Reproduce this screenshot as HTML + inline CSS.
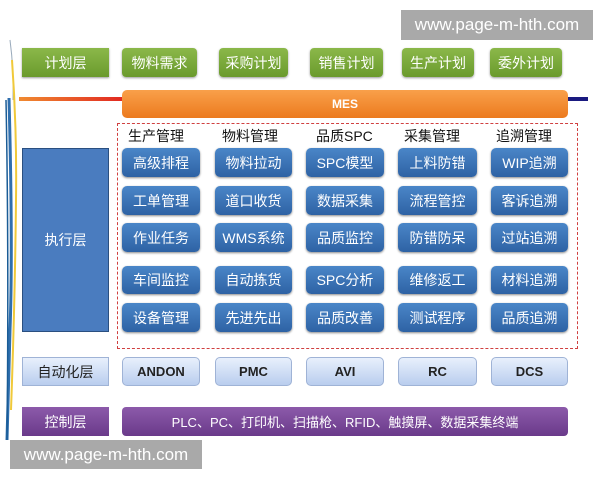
<!DOCTYPE html>
<html><head><meta charset="utf-8"><style>
*{margin:0;padding:0;box-sizing:border-box}
body{width:600px;height:480px;background:#fff;position:relative;overflow:hidden;font-family:"Liberation Sans","Noto Sans CJK SC",sans-serif}
.b{position:absolute;display:flex;align-items:center;justify-content:center;font-size:14px;white-space:nowrap}
.g{background:linear-gradient(#8bb84a,#6a9a2c);color:#fff;border-radius:4px;box-shadow:0 1px 2px #999}
.bl{background:linear-gradient(#4a86c8,#2e62a4);color:#fff;border-radius:5px;box-shadow:0 1px 2px #888}
.lb{background:linear-gradient(#e8f0fc,#b9cdee);color:#222;border:1px solid #9fb3d6;border-radius:5px;font-family:"Liberation Sans Narrow","Liberation Sans","Noto Sans CJK SC",sans-serif;font-weight:bold;font-size:13px}
.p{background:linear-gradient(#8c5aaa,#6a3a8a);color:#fff;border-radius:4px}
.h{position:absolute;top:126px;font-size:14px;color:#111}
.wm{position:absolute;background:#a9a9a9;color:#fff;font-size:17px;display:flex;align-items:center;justify-content:center}
</style></head><body>
<svg style="position:absolute;left:0;top:0" width="30" height="480">
<path d="M10 40 Q14 70 13 100" stroke="#9ab" stroke-width="1" fill="none"/>
<path d="M9 98 Q13 250 10 330 Q8 400 7 440" stroke="#2f6fae" stroke-width="3" fill="none"/>
<path d="M12 60 Q17 130 16 200 Q15 300 11 410" stroke="#f0c93a" stroke-width="2" fill="none"/>
<path d="M6 100 Q9 250 7 440" stroke="#1a5c96" stroke-width="1.5" fill="none"/>
</svg>
<div class="wm" style="left:401px;top:10px;width:192px;height:30px">www.page-m-hth.com</div>
<div class="b g" style="left:22px;top:48px;width:87px;height:29px;border-radius:0">计划层</div>
<div class="b g" style="left:122px;top:48px;width:75px;height:29px">物料需求</div>
<div class="b g" style="left:219px;top:48px;width:69px;height:29px">采购计划</div>
<div class="b g" style="left:310px;top:48px;width:73px;height:29px">销售计划</div>
<div class="b g" style="left:402px;top:48px;width:72px;height:29px">生产计划</div>
<div class="b g" style="left:490px;top:48px;width:72px;height:29px">委外计划</div>
<div style="position:absolute;left:19px;top:97px;width:569px;height:4px;background:linear-gradient(90deg,#f08a30,#e02020 20%,#e02020 95%,#1a1a80 95%)"></div>
<div class="b" style="left:122px;top:90px;width:446px;height:28px;background:linear-gradient(#f9a04a,#ec7a1e);border-radius:5px;color:#fff;font-size:12px;font-weight:bold">MES</div>
<div style="position:absolute;left:117px;top:123px;width:461px;height:226px;border:1.5px dashed #d04040"></div>
<div class="h" style="left:128px">生产管理</div>
<div class="h" style="left:222px">物料管理</div>
<div class="h" style="left:316px">品质SPC</div>
<div class="h" style="left:404px">采集管理</div>
<div class="h" style="left:496px">追溯管理</div>
<div class="b" style="left:22px;top:148px;width:87px;height:184px;background:#4a7cbf;border:1px solid #2a4f80;color:#fff">执行层</div>
<div class="b bl" style="left:122px;top:148px;width:78px;height:29px">高级排程</div>
<div class="b bl" style="left:215px;top:148px;width:77px;height:29px">物料拉动</div>
<div class="b bl" style="left:306px;top:148px;width:78px;height:29px">SPC模型</div>
<div class="b bl" style="left:398px;top:148px;width:79px;height:29px">上料防错</div>
<div class="b bl" style="left:491px;top:148px;width:77px;height:29px">WIP追溯</div>
<div class="b bl" style="left:122px;top:186px;width:78px;height:29px">工单管理</div>
<div class="b bl" style="left:215px;top:186px;width:77px;height:29px">道口收货</div>
<div class="b bl" style="left:306px;top:186px;width:78px;height:29px">数据采集</div>
<div class="b bl" style="left:398px;top:186px;width:79px;height:29px">流程管控</div>
<div class="b bl" style="left:491px;top:186px;width:77px;height:29px">客诉追溯</div>
<div class="b bl" style="left:122px;top:223px;width:78px;height:29px">作业任务</div>
<div class="b bl" style="left:215px;top:223px;width:77px;height:29px">WMS系统</div>
<div class="b bl" style="left:306px;top:223px;width:78px;height:29px">品质监控</div>
<div class="b bl" style="left:398px;top:223px;width:79px;height:29px">防错防呆</div>
<div class="b bl" style="left:491px;top:223px;width:77px;height:29px">过站追溯</div>
<div class="b bl" style="left:122px;top:266px;width:78px;height:28px">车间监控</div>
<div class="b bl" style="left:215px;top:266px;width:77px;height:28px">自动拣货</div>
<div class="b bl" style="left:306px;top:266px;width:78px;height:28px">SPC分析</div>
<div class="b bl" style="left:398px;top:266px;width:79px;height:28px">维修返工</div>
<div class="b bl" style="left:491px;top:266px;width:77px;height:28px">材料追溯</div>
<div class="b bl" style="left:122px;top:303px;width:78px;height:29px">设备管理</div>
<div class="b bl" style="left:215px;top:303px;width:77px;height:29px">先进先出</div>
<div class="b bl" style="left:306px;top:303px;width:78px;height:29px">品质改善</div>
<div class="b bl" style="left:398px;top:303px;width:79px;height:29px">测试程序</div>
<div class="b bl" style="left:491px;top:303px;width:77px;height:29px">品质追溯</div>
<div class="b lb" style="left:22px;top:357px;width:87px;height:29px;border-radius:0;font-weight:normal;font-size:14px">自动化层</div>
<div class="b lb" style="left:122px;top:357px;width:78px;height:29px">ANDON</div>
<div class="b lb" style="left:215px;top:357px;width:77px;height:29px">PMC</div>
<div class="b lb" style="left:306px;top:357px;width:78px;height:29px">AVI</div>
<div class="b lb" style="left:398px;top:357px;width:79px;height:29px">RC</div>
<div class="b lb" style="left:491px;top:357px;width:77px;height:29px">DCS</div>
<div class="b p" style="left:22px;top:407px;width:87px;height:29px;border-radius:0">控制层</div>
<div class="b p" style="left:122px;top:407px;width:446px;height:29px;font-size:13px">PLC、PC、打印机、扫描枪、RFID、触摸屏、数据采集终端</div>
<div class="wm" style="left:10px;top:440px;width:192px;height:29px">www.page-m-hth.com</div>
</body></html>
